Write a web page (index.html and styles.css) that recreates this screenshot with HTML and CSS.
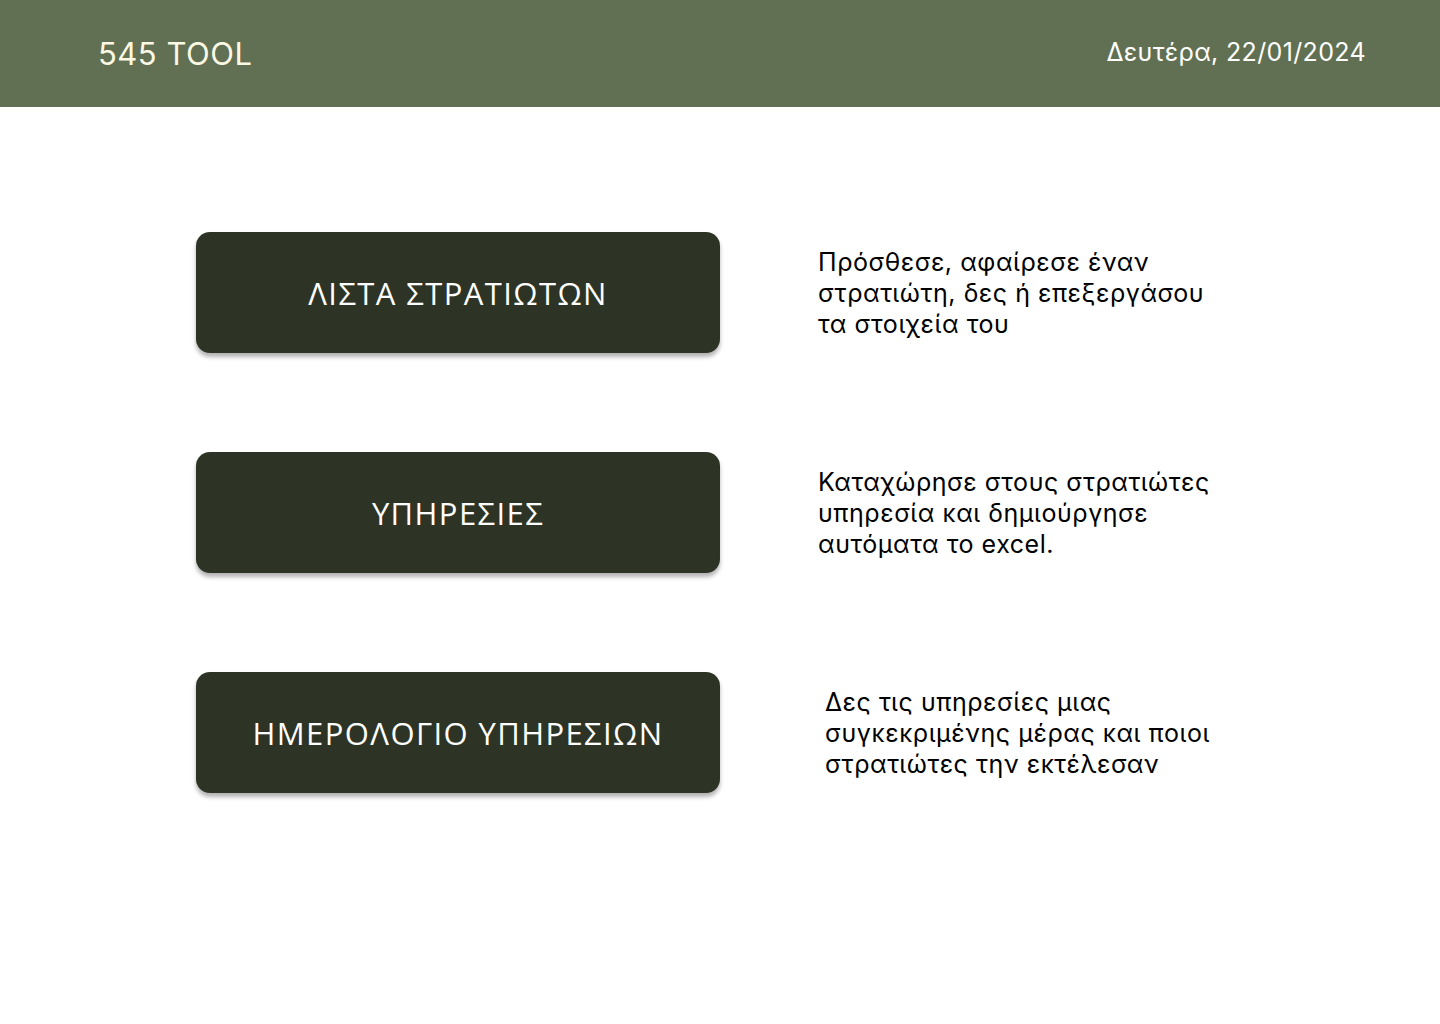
FILE: index.html
```html
<!DOCTYPE html>
<html lang="el">
<head>
<meta charset="utf-8">
<title>545 TOOL</title>
<link rel="stylesheet" href="styles.css">
</head>
<body>
<header class="topbar">
  <div class="brand">545 TOOL</div>
  <div class="date">Δευτέρα, 22/01/2024</div>
</header>
<main class="menu">
  <section class="row">
    <button class="tile">ΛΙΣΤΑ ΣΤΡΑΤΙΩΤΩΝ</button>
    <p class="desc">Πρόσθεσε, αφαίρεσε έναν<br>στρατιώτη, δες ή επεξεργάσου<br>τα στοιχεία του</p>
  </section>
  <section class="row">
    <button class="tile">ΥΠΗΡΕΣΙΕΣ</button>
    <p class="desc">Καταχώρησε στους στρατιώτες<br>υπηρεσία και δημιούργησε<br>αυτόματα το excel.</p>
  </section>
  <section class="row">
    <button class="tile">ΗΜΕΡΟΛΟΓΙΟ ΥΠΗΡΕΣΙΩΝ</button>
    <p class="desc desc-shift">Δες τις υπηρεσίες μιας<br>συγκεκριμένης μέρας και ποιοι<br>στρατιώτες την εκτέλεσαν</p>
  </section>
</main>
</body>
</html>
```
FILE: styles.css
```css
* { box-sizing: border-box; }
html, body { margin: 0; padding: 0; }
body {
  background: #ffffff;
  font-family: Inter, "Noto Sans", sans-serif;
  width: 1440px;
  min-height: 1024px;
}
.topbar {
  height: 107px;
  background: #617053;
  display: flex;
  align-items: center;
  justify-content: space-between;
  padding: 0 74px 0 98px;
}
.brand {
  color: #fbf8e4;
  font-size: 31px;
  font-weight: 400;
  letter-spacing: 0.5px;
  margin-top: -1px;
}
.date {
  color: #ffffff;
  font-size: 25px;
  font-weight: 400;
  letter-spacing: 0.35px;
  margin-top: -3px;
}
.menu {
  display: flex;
  flex-direction: column;
  gap: 99px;
  padding: 125px 0 0 196px;
}
.row {
  display: flex;
  align-items: flex-start;
  gap: 98px;
}
.tile {
  width: 524px;
  height: 121px;
  flex: none;
  border: none;
  border-radius: 14px;
  background: #2d3425;
  color: #ffffff;
  font-family: "Open Sans", sans-serif;
  font-size: 31px;
  font-weight: 400;
  letter-spacing: 1.4px;
  box-shadow: 0 4px 4px rgba(0, 0, 0, 0.3);
  cursor: pointer;
}
.desc {
  margin: 15px 0 0 0;
  font-family: Inter, "Noto Sans", sans-serif;
  font-size: 25px;
  line-height: 31px;
  letter-spacing: 0.55px;
  color: #000000;
}
.desc-shift { margin-left: 7px; }
```
